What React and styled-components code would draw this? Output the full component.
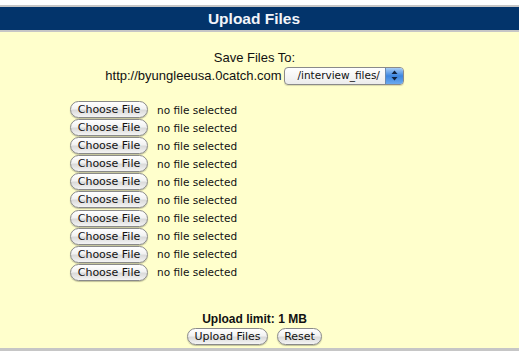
import React from "react";
import styled, { createGlobalStyle } from "styled-components";

const Global = createGlobalStyle`
  html, body { margin: 0; padding: 0; background: #ffffff; }
  body { font-family: "Liberation Sans", Arial, Helvetica, sans-serif; }
`;

const Page = styled.div`
  padding-top: 5px;
  width: 519px;
`;

const Header = styled.div`
  height: 23px;
  background: #03346b;
  border-top: 2px solid #c6c6c6;
  border-bottom: 2px solid #c6c6c6;
  display: flex;
  align-items: center;
  justify-content: center;
  padding-right: 11px;
  color: #f2f4fa;
  font-weight: bold;
  font-size: 15.5px;
`;

const Panel = styled.div`
  background: #ffffcc;
  height: 319px;
  border-bottom: 3px solid #c6c6c6;
  display: flex;
  flex-direction: column;
  box-sizing: border-box;
  padding-top: 18px;
  padding-right: 10px;
`;

const Line = styled.div`
  text-align: center;
  font-size: 13px;
  line-height: 15px;
  color: #111;
  display: flex;
  justify-content: center;
  align-items: center;
  gap: 2px;
  white-space: nowrap;
  height: ${(p) => p.$h || 15}px;
  margin-top: ${(p) => p.$mt || 0}px;
`;

const Select = styled.div`
  display: flex;
  align-items: center;
  width: 120px;
  height: 18px;
  box-sizing: border-box;
  border: 1px solid #8a8a8a;
  border-radius: 4px;
  background: linear-gradient(#ffffff, #ececec);
  font-family: "DejaVu Sans", "Liberation Sans", sans-serif;
  font-size: 10.5px;
  color: #111;
  overflow: hidden;
  box-shadow: 0 1px 1px rgba(0, 0, 0, 0.15);
`;

const SelectText = styled.span`
  flex: 1;
  padding-left: 8px;
`;

const SelectArrow = styled.span`
  width: 17px;
  height: 100%;
  background: linear-gradient(#a8cdf5, #3d86e0 50%, #6aa9ef);
  border-left: 1px solid #6a8ab0;
  display: flex;
  align-items: center;
  justify-content: center;
`;

const Files = styled.div`
  margin-top: 16px;
  margin-left: 70px;
  display: flex;
  flex-direction: column;
  gap: 1.1px;
`;

const Row = styled.div`
  display: flex;
  align-items: center;
  height: 17px;
  gap: 9px;
`;

const Button = styled.button`
  height: 17px;
  box-sizing: border-box;
  padding: 0;
  border: 1px solid #8a8a8a;
  border-radius: 9px;
  background: linear-gradient(#ffffff 0%, #f2f2f2 45%, #dadada 55%, #f4f4f4 100%);
  box-shadow: 0 1px 1px rgba(0, 0, 0, 0.25);
  font-family: "DejaVu Sans", "Liberation Sans", sans-serif;
  font-size: 11px;
  line-height: 15px;
  white-space: nowrap;
  color: #111;
  cursor: default;
  width: ${(p) => p.$w}px;
  display: flex;
  align-items: center;
  justify-content: center;
`;

const Status = styled.span`
  font-family: "DejaVu Sans", "Liberation Sans", sans-serif;
  font-size: 10.5px;
  white-space: nowrap;
  color: #111;
`;

const Footer = styled.div`
  margin-top: auto;
  padding-bottom: 3px;
  display: flex;
  flex-direction: column;
  align-items: center;
`;

const Limit = styled.div`
  font-size: 12px;
  font-weight: bold;
  line-height: 14px;
  color: #111;
`;

const Buttons = styled.div`
  display: flex;
  gap: 9px;
  margin-top: 2px;
`;

export default function App() {
  const rows = Array.from({ length: 10 });
  return (
    <>
      <Global />
      <Page>
        <Header>Upload Files</Header>
        <Panel>
          <Line>Save Files To:</Line>
          <Line $h={19} $mt={1}>
            http://byungleeusa.0catch.com
            <Select>
              <SelectText>/interview_files/</SelectText>
              <SelectArrow>
                <svg width="7" height="11" viewBox="0 0 7 11">
                  <path d="M3.5 0.5 L6.5 4 L0.5 4 Z" fill="#10233f" />
                  <path d="M3.5 10.5 L6.5 7 L0.5 7 Z" fill="#10233f" />
                </svg>
              </SelectArrow>
            </Select>
          </Line>
          <Files>
            {rows.map((_, i) => (
              <Row key={i}>
                <Button type="button" $w={78}>Choose File</Button>
                <Status>no file selected</Status>
              </Row>
            ))}
          </Files>
          <Footer>
            <Limit>Upload limit: 1 MB</Limit>
            <Buttons>
              <Button type="button" $w={81}>Upload Files</Button>
              <Button type="button" $w={45}>Reset</Button>
            </Buttons>
          </Footer>
        </Panel>
      </Page>
    </>
  );
}
